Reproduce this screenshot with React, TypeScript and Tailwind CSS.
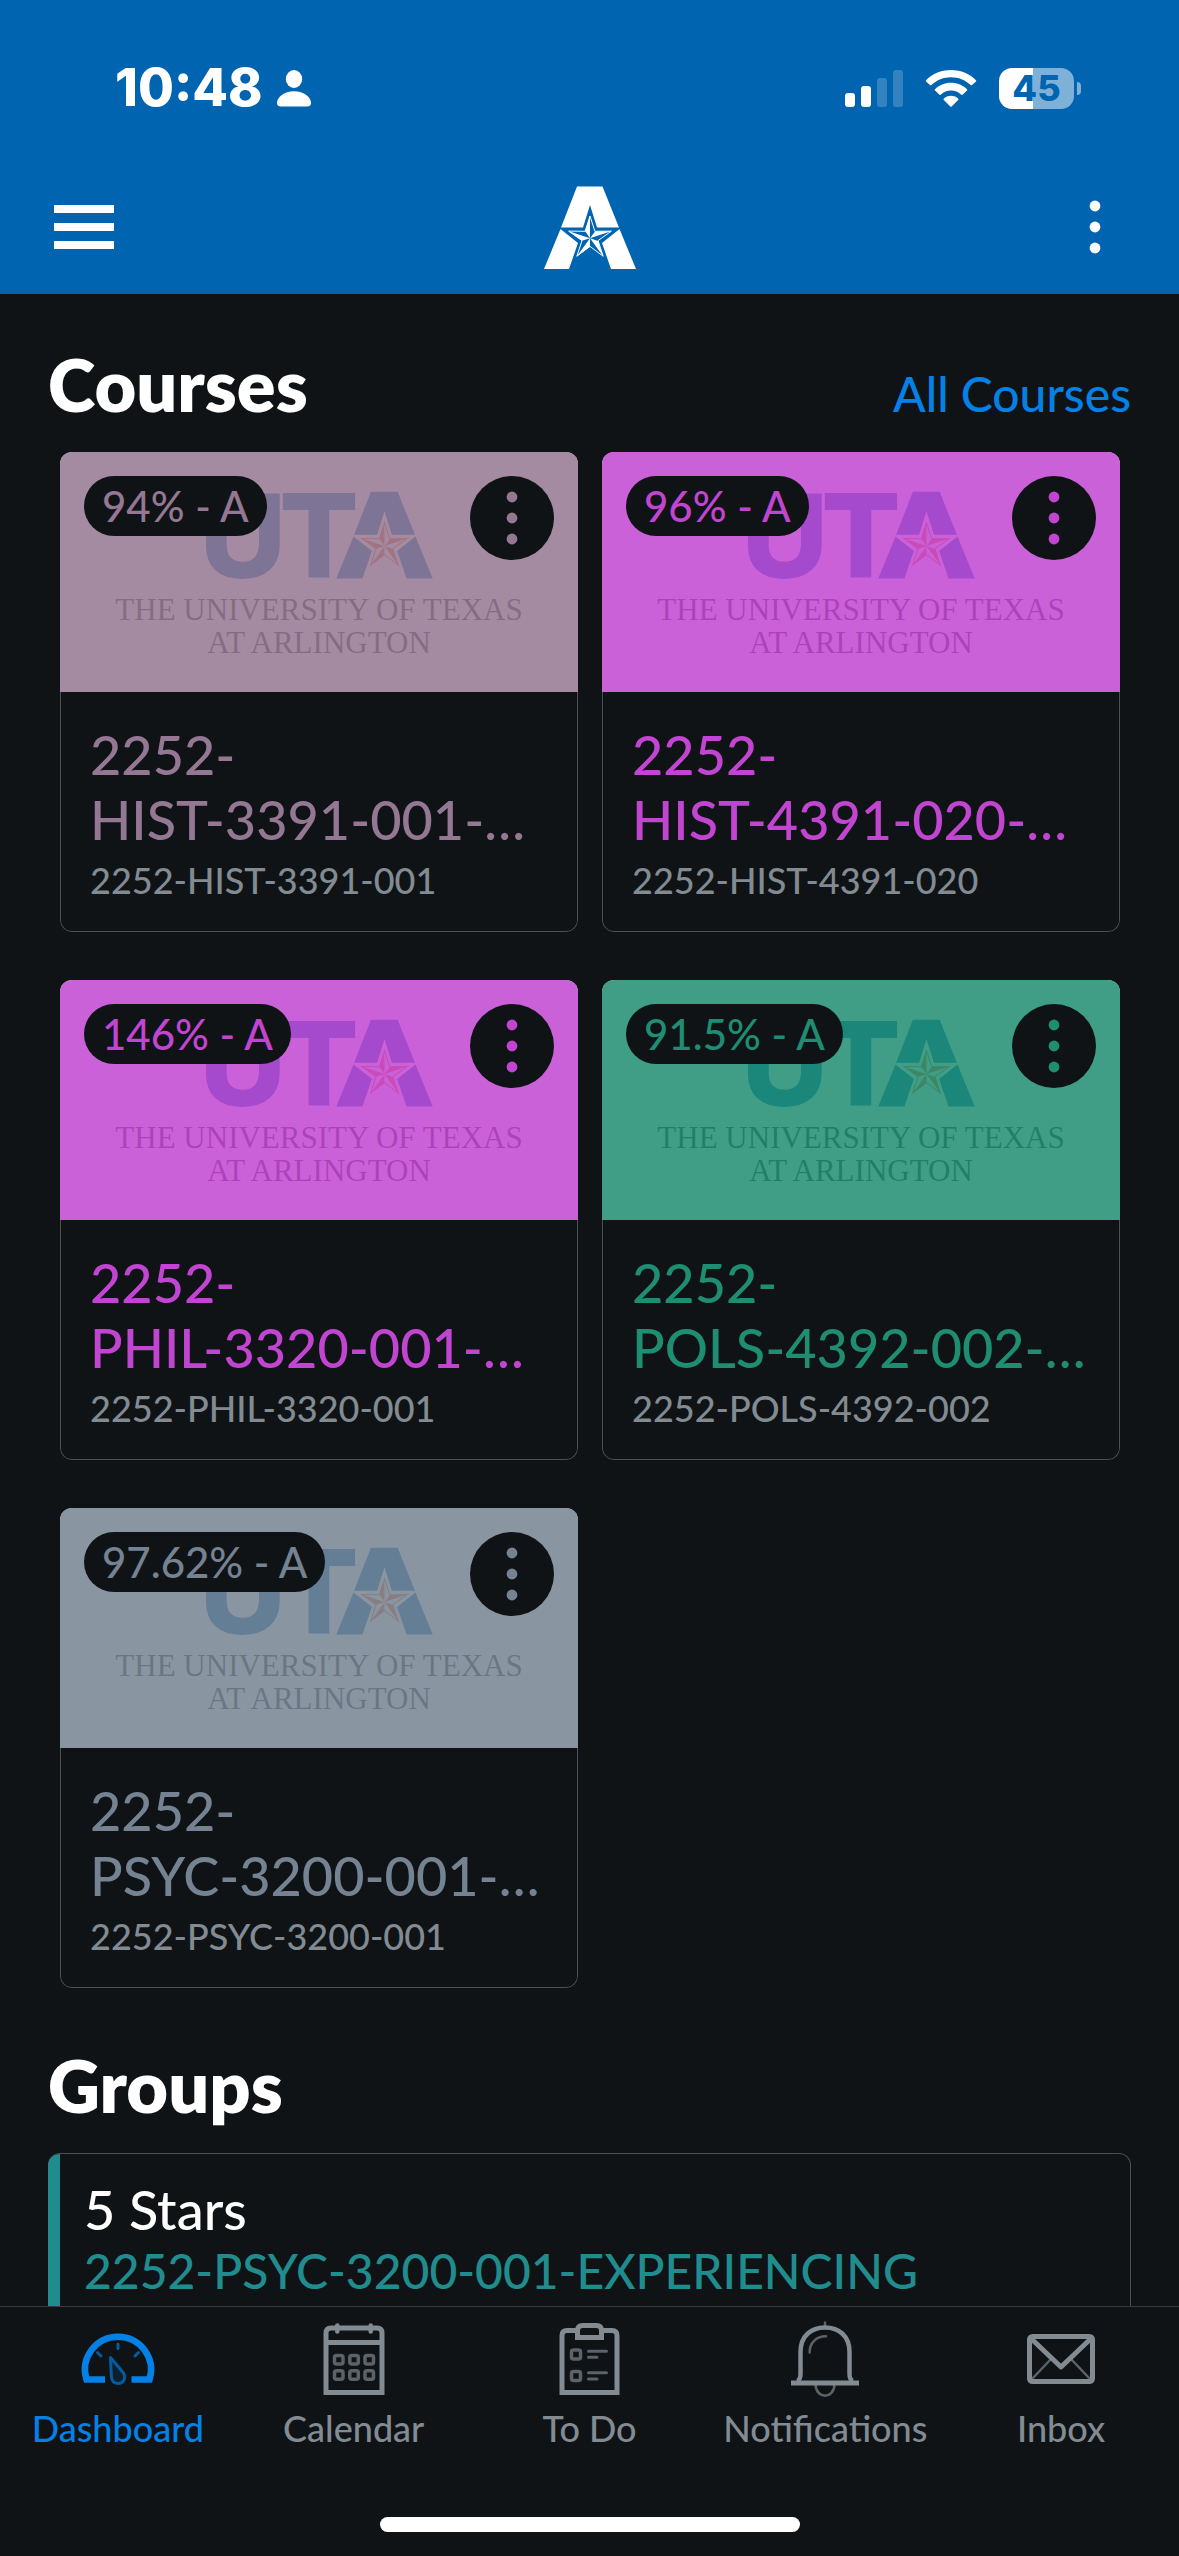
import type { ReactNode } from 'react'

type Course = {
  grade: string
  term: string
  name: string
  code: string
  text: string
  tint: string
}

const courses: Course[] = [
  { grade: '94% - A', term: '2252-', name: 'HIST-3391-001-…', code: '2252-HIST-3391-001', text: 'text-[#947792]', tint: 'bg-[#947792]' },
  { grade: '96% - A', term: '2252-', name: 'HIST-4391-020-…', code: '2252-HIST-4391-020', text: 'text-[#c245d1]', tint: 'bg-[#c245d1]' },
  { grade: '146% - A', term: '2252-', name: 'PHIL-3320-001-…', code: '2252-PHIL-3320-001', text: 'text-[#c245d1]', tint: 'bg-[#c245d1]' },
  { grade: '91.5% - A', term: '2252-', name: 'POLS-4392-002-…', code: '2252-POLS-4392-002', text: 'text-[#1f8d71]', tint: 'bg-[#1f8d71]' },
  { grade: '97.62% - A', term: '2252-', name: 'PSYC-3200-001-…', code: '2252-PSYC-3200-001', text: 'text-[#758292]', tint: 'bg-[#758292]' },
]

// The star has five points, each split into a solid half and an open half
const starHalves = [0, 72, 144, 216, 288]

function StarA({ star }: { star: string }) {
  return (
    <g>
      <path
        fill="currentColor"
        d="M37 5.5H62.5L79 46.5H57L50 24L43 46.5H21ZM20.5 48L38 62L29 88H4ZM79.5 48L62 62L71 88H96Z"
      />
      <path
        fill="none"
        stroke={star}
        strokeWidth="1"
        d="M50 35L54.9 50.3L71.4 50.1L58 59.6L63.2 75.3L50 65.4L36.8 75.3L42 59.6L28.6 50.1L45.1 50.3Z"
      />
      {starHalves.map((angle) => (
        <path key={angle} fill={star} d="M50 57.2L50 35L45.1 50.3Z" transform={`rotate(${angle} 50 57.2)`} />
      ))}
    </g>
  )
}

function Kebab({ className }: { className: string }) {
  return (
    <svg viewBox="0 0 12 56" className={className} fill="currentColor" aria-hidden="true">
      <circle cx="6" cy="7" r="5.4" />
      <circle cx="6" cy="28" r="5.4" />
      <circle cx="6" cy="49" r="5.4" />
    </svg>
  )
}

function StatusBar() {
  return (
    <div className="flex h-[176px] items-center justify-between pl-[115px] pr-[98px]">
      <div className="flex items-center gap-[14px]">
        <span className="font-[Inter,sans-serif] text-[52px] leading-[60px] font-extrabold">10:48</span>
        <svg viewBox="0 0 34 37" className="h-[37px] w-[34px]" fill="currentColor" aria-hidden="true">
          <ellipse cx="17" cy="9" rx="8.2" ry="9" />
          <path d="M4 36.5C1 36.5 0 35 0 33C0 27 7 21.2 17 21.2S34 27 34 33C34 35 33 36.5 30 36.5Z" />
        </svg>
      </div>
      <div className="flex items-center">
        <svg viewBox="0 0 58 38" className="h-[38px] w-[58px]" fill="currentColor" aria-hidden="true">
          <rect x="0" y="24" width="10" height="14" rx="3" />
          <rect x="16" y="17" width="10" height="21" rx="3" />
          <rect x="32" y="9" width="10" height="29" rx="3" opacity="0.2" />
          <rect x="48" y="1" width="10" height="37" rx="3" opacity="0.2" />
        </svg>
        <svg viewBox="0 0 52 38" className="ml-[22px] h-[38px] w-[52px]" fill="currentColor" aria-hidden="true">
          <path d="M26 1C36 1 45 5 51 11.2Q51.5 12 51 12.6L47 16Q46.3 16.5 45.6 16C40 11 33.5 8.3 26 8.3S12 11 6.4 16Q5.7 16.5 5 16L1 12.6Q.5 12 1 11.2C7 5 16 1 26 1Z" />
          <path d="M26 13.8C32.5 13.8 38 16.3 42 20.3Q42.5 21 42 21.6L37.5 25.7Q36.8 26.2 36 25.6C33.3 23 30 21.5 26 21.5S18.7 23 16 25.6Q15.2 26.2 14.5 25.7L10 21.6Q9.5 21 10 20.3C14 16.3 19.5 13.8 26 13.8Z" />
          <path d="M26 26.8C29 26.8 31.5 27.9 33.3 29.7Q33.8 30.4 33.2 31L26.7 37.4Q26 38 25.3 37.4L18.8 31Q18.2 30.4 18.7 29.7C20.5 27.9 23 26.8 26 26.8Z" />
        </svg>
        <div className="ml-[22px] flex items-center gap-[3px]">
          <div className="flex h-[41px] w-[75px] items-center justify-center rounded-[13px] bg-linear-to-r from-white from-45% to-[#7fb1d8] to-45%">
            <span className="font-[Inter,sans-serif] text-[36px] leading-[41px] font-extrabold text-[#0064b1]">45</span>
          </div>
          <div className="h-[13px] w-1 rounded-r-full bg-[#7fb1d8]" />
        </div>
      </div>
    </div>
  )
}

function TopBar() {
  return (
    <div className="grid h-[102px] grid-cols-3 items-center">
      <button type="button" aria-label="Menu" className="ml-[54px] flex w-[60px] flex-col gap-[10px]">
        <span className="h-2 w-full bg-white" />
        <span className="h-2 w-full bg-white" />
        <span className="h-2 w-full bg-white" />
      </button>
      <svg viewBox="0 0 100 92" className="h-[92px] w-[100px] justify-self-center" aria-label="UTA">
        <StarA star="#ffffff" />
      </svg>
      <button type="button" aria-label="More options" className="mr-[78px] justify-self-end">
        <Kebab className="h-[56px] w-[12px]" />
      </button>
    </div>
  )
}

function CourseCard({ course }: { course: Course }) {
  return (
    <article className={`overflow-hidden rounded-xl ${course.text}`}>
      <div className="relative h-[240px] bg-white">
        <div className="flex flex-col items-center pt-[36px]">
          <svg viewBox="0 0 232 94" className="h-[94px] w-[232px] overflow-visible text-[#0064b1]" aria-hidden="true">
            <g
              className="font-['Liberation_Sans',sans-serif] font-bold"
              fontSize="116"
              fill="currentColor"
              stroke="currentColor"
              strokeWidth="4"
            >
              <text x="40" y="88" textAnchor="middle">U</text>
              <text x="116" y="88" textAnchor="middle">T</text>
            </g>
            <g transform="translate(129 -2) scale(1.05)">
              <StarA star="#f0662a" />
            </g>
          </svg>
          <p className="mt-[11px] text-center font-['Liberation_Serif',serif] text-[31px] leading-[33px] text-[#333333]">
            THE UNIVERSITY OF TEXAS
            <br />
            AT ARLINGTON
          </p>
        </div>
        <div className={`absolute inset-0 opacity-85 ${course.tint}`} />
        <span className="absolute top-6 left-6 rounded-full bg-[#0f1316] px-[18px] text-[42px] leading-[60px]">
          {course.grade}
        </span>
        <button
          type="button"
          aria-label={`Options for ${course.code}`}
          className="absolute top-6 right-6 flex size-[84px] items-center justify-center rounded-full bg-[#0f1316]"
        >
          <Kebab className="h-[56px] w-[12px]" />
        </button>
      </div>
      <div className="h-[240px] rounded-b-xl border border-t-0 border-[#4b5054] px-[29px] pt-[30px]">
        <h3 className="text-[54px] leading-[65px] whitespace-nowrap">
          {course.term}
          <br />
          {course.name}
        </h3>
        <p className="mt-[7px] text-[36px] leading-[43px] text-[#828b92]">{course.code}</p>
      </div>
    </article>
  )
}

function TabIcon({ children }: { children: ReactNode }) {
  return (
    <svg
      viewBox="0 0 88 88"
      className="size-[88px]"
      fill="none"
      stroke="currentColor"
      strokeWidth="5"
      aria-hidden="true"
    >
      {children}
    </svg>
  )
}

const tabs = [
  {
    label: 'Dashboard',
    active: true,
    icon: (
      <TabIcon>
        <path strokeWidth="6.5" d="M31 60.5H12.5A33 33 0 1 1 75.5 60.5H57.5" />
        <g stroke="#055ba0" strokeWidth="3" strokeLinecap="round">
          <path d="M44 25V29.5M23.5 33.5L27 37M64.5 33.5L61 37" />
          <path
            fill="#0e1e2a"
            strokeLinejoin="round"
            d="M36.5 38.5L49.5 54C52.5 60 49 64.5 44 64.5C39.5 64.5 37.5 61 37.3 57Z"
          />
        </g>
      </TabIcon>
    ),
  },
  {
    label: 'Calendar',
    icon: (
      <TabIcon>
        <path d="M16 73.5V14Q16 9 21 9H67Q72 9 72 14V73.5ZM16 23.5H72" />
        <path strokeLinecap="round" strokeWidth="4.5" d="M27.3 6.5V12.5M60.7 6.5V12.5" />
        <g stroke="#5d6268" strokeWidth="3.5">
          {[24.5, 39.8, 55].map((x) => (
            <g key={x}>
              <rect x={x} y="36.5" width="8.5" height="8.5" rx="2" />
              <rect x={x} y="51.8" width="8.5" height="8.5" rx="2" />
            </g>
          ))}
        </g>
      </TabIcon>
    ),
  },
  {
    label: 'To Do',
    icon: (
      <TabIcon>
        <path d="M32 11.5H22Q17 11.5 17 16.5V73.5H72V16.5Q72 11.5 67 11.5H57" />
        <path d="M32.5 18.5V11.5Q32.5 6.5 37.5 6.5H51.5Q56.5 6.5 56.5 11.5V18.5Z" />
        <g stroke="#5d6268" strokeWidth="3.5" strokeLinecap="round">
          <rect x="26.5" y="31" width="9" height="9" rx="2" />
          <rect x="26.5" y="52.5" width="9" height="9" rx="2" />
          <path strokeWidth="3" d="M43.5 32.3H61.5M43.5 38.3H52M43.5 53.8H61.5M43.5 60H52" />
        </g>
      </TabIcon>
    ),
  },
  {
    label: 'Notifications',
    icon: (
      <TabIcon>
        <g stroke="#5d6268" strokeWidth="2.5" strokeLinecap="round">
          <path d="M44 3.5V7M28.6 33.5C28.6 24 35 17.3 45 17.3" />
          <path d="M34.5 65C34.5 80.5 53.5 80.5 53.5 65" />
        </g>
        <path strokeWidth="4.5" d="M16 62Q19.5 61 19.5 55V33C19.5 17 30 8.5 44 8.5S68.5 17 68.5 33V55Q68.5 61 72 62" />
        <path d="M10 64H78" />
      </TabIcon>
    ),
  },
  {
    label: 'Inbox',
    icon: (
      <TabIcon>
        <path stroke="#5d6268" strokeWidth="2.5" d="M14 61L34 40M74 61L54 40" />
        <rect x="12.5" y="17.5" width="63" height="45" rx="3" />
        <path strokeLinejoin="round" d="M13.5 19L44 48L74.5 19" />
      </TabIcon>
    ),
  },
]

function TabBar() {
  return (
    <nav className="border-t border-[#373b3e] bg-[#0f1316]">
      <div className="grid grid-cols-5 pt-3">
        {tabs.map((tab) => (
          <button
            key={tab.label}
            type="button"
            className={`flex flex-col items-center font-medium ${tab.active ? 'text-[#0580e5]' : 'text-[#828b92]'}`}
          >
            {tab.icon}
            <span className="text-[36px] leading-[43px]">{tab.label}</span>
          </button>
        ))}
      </div>
      {/* Home indicator */}
      <div className="flex justify-center pt-[67px] pb-6">
        <div className="h-[15px] w-[420px] rounded-full bg-white" />
      </div>
    </nav>
  )
}

export default function App() {
  return (
    <div className="flex h-screen flex-col bg-[#0f1316] font-[Lato,sans-serif] font-medium text-white">
      <header className="bg-[#0064b1] pb-4">
        <StatusBar />
        <TopBar />
      </header>

      <main className="min-h-0 flex-1 overflow-y-auto px-12 pt-[47px] [scrollbar-width:none]">
        <section>
          <div className="flex items-baseline justify-between">
            <h1 className="text-[72px] leading-[86px] font-extrabold">Courses</h1>
            <a href="#" className="text-[48px] leading-[58px] text-[#0580e5]">
              All Courses
            </a>
          </div>
          <div className="mt-[25px] grid grid-cols-2 gap-x-6 gap-y-12 pl-3 pr-[11px]">
            {courses.map((course) => (
              <CourseCard key={course.code} course={course} />
            ))}
          </div>
        </section>

        <section className="mt-[54px]">
          <h2 className="text-[72px] leading-[86px] font-extrabold">Groups</h2>
          <a href="#" className="mt-[25px] flex overflow-hidden rounded-xl border border-l-0 border-[#4b5054]">
            <span className="w-3 bg-[#218c8d]" />
            <span className="flex flex-col px-6 py-[23px]">
              <span className="text-[54px] leading-[65px]">5 Stars</span>
              <span className="text-[48px] leading-[58px] text-[#218c8d]">2252-PSYC-3200-001-EXPERIENCING</span>
            </span>
          </a>
        </section>
      </main>

      <TabBar />
    </div>
  )
}
